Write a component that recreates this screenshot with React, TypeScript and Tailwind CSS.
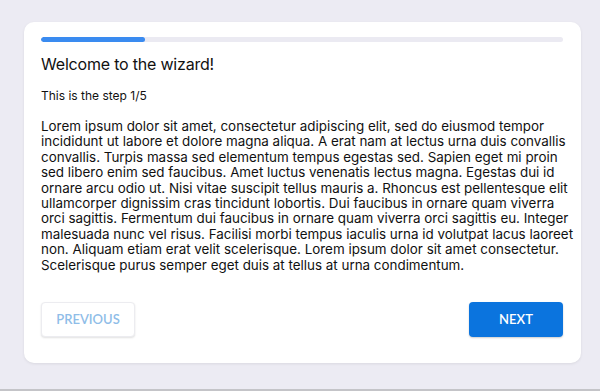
const lines = [
    'Lorem ipsum dolor sit amet, consectetur adipiscing elit, sed do eiusmod tempor',
    'incididunt ut labore et dolore magna aliqua. A erat nam at lectus urna duis convallis',
    'convallis. Turpis massa sed elementum tempus egestas sed. Sapien eget mi proin',
    'sed libero enim sed faucibus. Amet luctus venenatis lectus magna. Egestas dui id',
    'ornare arcu odio ut. Nisi vitae suscipit tellus mauris a. Rhoncus est pellentesque elit',
    'ullamcorper dignissim cras tincidunt lobortis. Dui faucibus in ornare quam viverra',
    'orci sagittis. Fermentum dui faucibus in ornare quam viverra orci sagittis eu. Integer',
    'malesuada nunc vel risus. Facilisi morbi tempus iaculis urna id volutpat lacus laoreet',
    'non. Aliquam etiam erat velit scelerisque. Lorem ipsum dolor sit amet consectetur.',
    'Scelerisque purus semper eget duis at tellus at urna condimentum.',
]

export default function App() {
    const step = 1
    const total = 5

    return (
        <div className="h-[391px] bg-[#ecebf3] border-b-2 border-[#c4c4c8] pl-6 pr-[19px] pt-[22px] font-['Inter',sans-serif]">
            <div className="bg-white rounded-[10px] shadow-[0_1px_3px_rgba(0,0,0,0.08)] pl-[17px] pr-[18px] pt-[15px] pb-[26px]">
                <div className="h-[5px] w-full rounded-full bg-[#ebeaf2] overflow-hidden">
                    <div className="h-full rounded-full bg-[#3a8bf0]" style={{ width: `${(step / total) * 100}%` }} />
                </div>
                <h1 className="mt-[12px] text-[16px] leading-5 tracking-[-0.2px] text-[#111]">Welcome to the wizard!</h1>
                <p className="mt-[14px] text-[12px] leading-4 text-[#111]">This is the step {step}/{total}</p>
                <div className="mt-[15px] text-[13.4px] leading-[15.4px] text-[#111]">
                    {lines.map((line, i) => (
                        <p key={i} className="whitespace-nowrap">{line}</p>
                    ))}
                </div>
                <div className="mt-[29px] flex justify-between font-['Lato',sans-serif]">
                    <button className="w-[94px] h-[35px] rounded-[4px] border border-[#ececf0] bg-white shadow-[0_1px_2px_rgba(0,0,0,0.12)] text-[13px] font-semibold text-[#8fbde8]">
                        PREVIOUS
                    </button>
                    <button className="w-[94px] h-[35px] rounded-[4px] bg-[#0b74de] shadow-[0_1px_2px_rgba(0,0,0,0.2)] text-[13px] font-semibold text-white">
                        NEXT
                    </button>
                </div>
            </div>
        </div>
    )
}
